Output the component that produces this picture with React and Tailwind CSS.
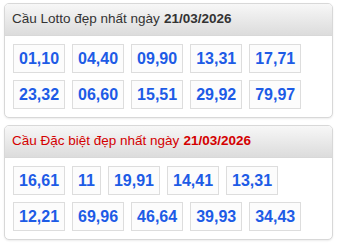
import React from "react";

const lotto = [["01,10","04,40","09,90","13,31","17,71"],["23,32","06,60","15,51","29,92","79,97"]];
const db = [["16,61","11","19,91","14,41","13,31"],["12,21","69,96","46,64","39,93","34,43"]];

function Panel({ title, red, rows }) {
  return (
    <div className="mx-[4px] rounded-[5px] border border-[#d8d8d8] bg-white shadow-[0_1px_2px_rgba(0,0,0,0.08)] overflow-hidden">
      <div className={`h-[32px] flex items-center pl-[7px] text-[13.5px] bg-gradient-to-b from-[#f7f7f7] to-[#dcdcdc] border-b border-[#d8d8d8] ${red ? "text-[#d40000]" : "text-[#333333]"}`}>
        <span>{title}</span><span className="ml-[4px] font-bold">21/03/2026</span>
      </div>
      <div className="px-[8px] pt-[8px] pb-[8px] flex flex-col gap-[7px]">
        {rows.map((r, i) => (
          <div key={i} className="flex gap-[7px]">
            {r.map((n, j) => (
              <div key={j} className="h-[29px] px-[5px] border border-[#dddddd] bg-[#fcfcfc] flex items-center justify-center text-[16px] font-bold text-[#1d5be6]">{n}</div>
            ))}
          </div>
        ))}
      </div>
    </div>
  );
}

export default function App() {
  return (
    <div className="w-[337px] h-[244px] bg-white pt-[3px] flex flex-col gap-[7px]" style={{ fontFamily: '"Liberation Sans", Arial, sans-serif' }}>
      <Panel title="Cầu Lotto đẹp nhất ngày" rows={lotto} />
      <Panel title="Cầu Đặc biệt đẹp nhất ngày" red rows={db} />
    </div>
  );
}
